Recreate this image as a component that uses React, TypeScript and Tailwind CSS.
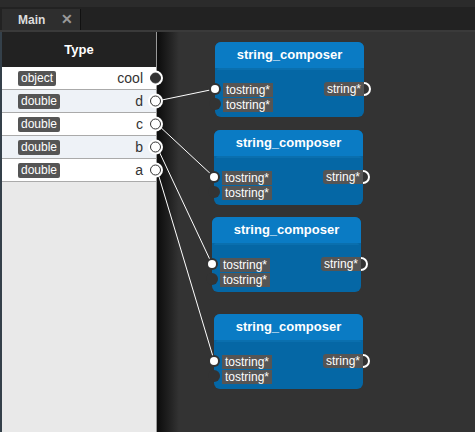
import React from "react";

const rows = [
  { type: "object", name: "cool", filled: true, alt: false },
  { type: "double", name: "d", filled: false, alt: true },
  { type: "double", name: "c", filled: false, alt: false },
  { type: "double", name: "b", filled: false, alt: true },
  { type: "double", name: "a", filled: false, alt: false },
];

// node positions on the canvas (relative to the area under the tab bar)
const nodes = [
  { x: 215, y: 10 },
  { x: 214, y: 98 },
  { x: 212, y: 185 },
  { x: 214, y: 282 },
];

const wires = [
  { x1: 157, y1: 69, x2: 215, y2: 57 },
  { x1: 157, y1: 92, x2: 214, y2: 145 },
  { x1: 157, y1: 115, x2: 212, y2: 232 },
  { x1: 157, y1: 138, x2: 214, y2: 328 },
];

function PanelPort({ filled }: { filled: boolean }) {
  return (
    <span className="absolute right-[-7px] top-1/2 z-20 flex h-[15px] w-[15px] -translate-y-1/2 items-center justify-center rounded-full bg-white">
      <span
        className={`h-[11px] w-[11px] rounded-full border border-[#333] ${filled ? "bg-[#333]" : "bg-white"}`}
      />
    </span>
  );
}

function Label({ text }: { text: string }) {
  return (
    <span className="bg-[#555] px-[3px] text-[12px] leading-[14px] text-white">{text}</span>
  );
}

function ComposerNode({ x, y }: { x: number; y: number }) {
  return (
    <div
      className="absolute z-10 flex h-[75px] w-[149px] flex-col rounded-[6px] bg-[#0567a5]"
      style={{ left: x, top: y }}
    >
      <div className="flex h-[26px] items-center justify-center rounded-t-[6px] bg-[#0a7bc4] text-[13px] font-bold text-white">
        string_composer
      </div>
      <div className="mx-[2px] h-[2px] rounded-t-[4px] bg-[#0a6fae]" />
      <div className="flex flex-col gap-px pt-[12px]">
        <div className="relative flex h-[14px] items-center justify-between">
          <span className="absolute left-[-6px] top-1/2 flex h-[12px] w-[12px] -translate-y-1/2 items-center justify-center rounded-full bg-[#333]">
            <span className="h-[8px] w-[8px] rounded-full bg-white" />
          </span>
          <span className="ml-[8px]">
            <Label text="tostring*" />
          </span>
          <span className="absolute right-[-7px] top-1/2 h-[14px] w-[14px] -translate-y-1/2 rounded-full border-2 border-white bg-[#333]" />
          <span className="relative rounded-l-[3px] bg-[#555] px-[3px] text-[12px] leading-[14px] text-white">
            string*
          </span>
        </div>
        <div className="relative flex h-[14px] items-center">
          <span className="absolute left-[-6px] top-1/2 h-[12px] w-[12px] -translate-y-1/2 rounded-full bg-[#333]" />
          <span className="ml-[8px]">
            <Label text="tostring*" />
          </span>
        </div>
      </div>
    </div>
  );
}

export default function App() {
  return (
    <div
      className="flex h-[432px] w-[475px] flex-col overflow-hidden bg-[#333]"
      style={{ fontFamily: '"Liberation Sans", Arial, sans-serif' }}
    >
      <div className="h-[7px] bg-[#2b2b2b]" />
      <div className="flex h-[23px] items-end bg-[#222]">
        <div className="ml-[2px] flex h-[21px] w-[79px] items-center justify-between border-r border-[#111] bg-[#2e2e2e] pl-[16px] pr-[7px] text-[12px] font-bold text-[#ddd]">
          <span>Main</span>
          <span className="text-[14px] text-[#999]">✕</span>
        </div>
      </div>
      <div className="h-[2px] bg-[#3a3a3a]" />

      <div className="relative flex flex-1">
        <div className="w-[2px] bg-[#34404a]" />
        <div className="relative z-20 flex w-[155px] flex-col border-r border-[#999] bg-[#e9e9e9]">
          <div className="flex h-[35px] items-center justify-center bg-[#222] text-[13px] font-bold text-white">
            Type
          </div>
          {rows.map((row) => (
            <div
              key={row.name}
              className={`relative flex h-[23px] items-center justify-between border-b border-[#aaa] pl-[16px] pr-[13px] ${row.alt ? "bg-[#eef2f7]" : "bg-white"}`}
            >
              <span className="rounded-[2px] bg-[#555] px-[3px] text-[12px] leading-[15px] text-white">
                {row.type}
              </span>
              <span className="text-[14px] text-[#333]">{row.name}</span>
              <PanelPort filled={row.filled} />
            </div>
          ))}
        </div>
        <div className="w-[22px] bg-gradient-to-r from-[#0c0c0c] to-[#333]" />
        <div className="flex-1" />

        <svg className="absolute left-0 top-0 z-10" width="475" height="400">
          {wires.map((w, i) => (
            <line key={i} x1={w.x1} y1={w.y1} x2={w.x2} y2={w.y2} stroke="#fff" strokeWidth="1" />
          ))}
        </svg>

        {nodes.map((n, i) => (
          <ComposerNode key={i} x={n.x} y={n.y} />
        ))}
      </div>
    </div>
  );
}
